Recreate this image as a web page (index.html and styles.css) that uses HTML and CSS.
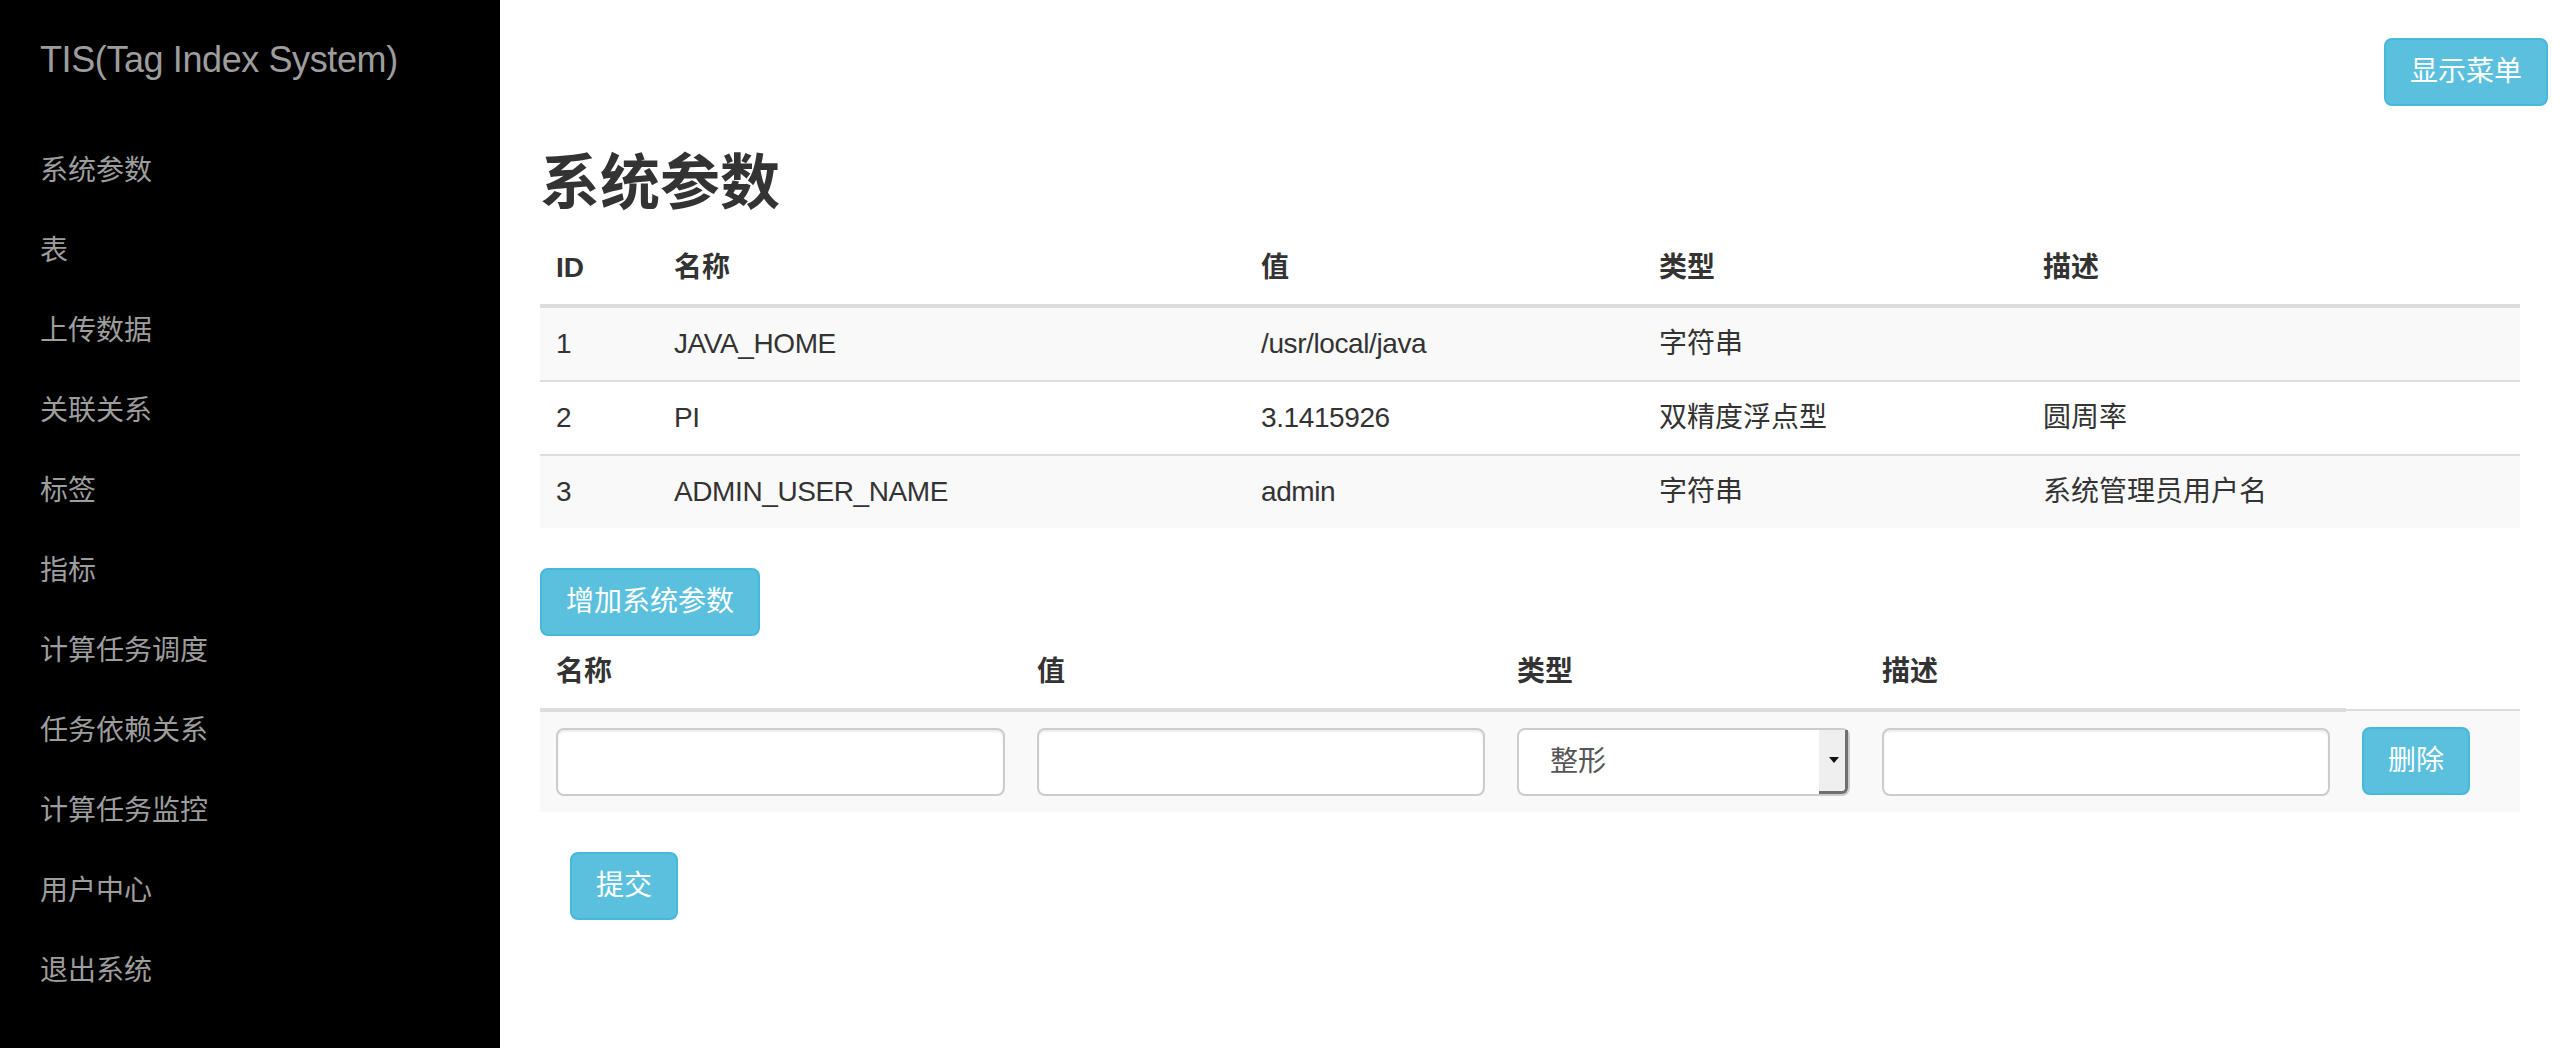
FILE: index.html
```html
<!DOCTYPE html>
<html lang="zh-CN">
<head>
<meta charset="utf-8">
<title>TIS(Tag Index System)</title>
<link rel="stylesheet" href="styles.css">
</head>
<body>
<aside class="sidebar">
  <div class="brand">TIS(Tag Index System)</div>
  <ul class="nav">
    <li><a href="#">系统参数</a></li>
    <li><a href="#">表</a></li>
    <li><a href="#">上传数据</a></li>
    <li><a href="#">关联关系</a></li>
    <li><a href="#">标签</a></li>
    <li><a href="#">指标</a></li>
    <li><a href="#">计算任务调度</a></li>
    <li><a href="#">任务依赖关系</a></li>
    <li><a href="#">计算任务监控</a></li>
    <li><a href="#">用户中心</a></li>
    <li><a href="#">退出系统</a></li>
  </ul>
</aside>
<main class="main">
  <div class="topbar">
    <button class="btn btn-info" type="button">显示菜单</button>
  </div>
  <div class="content">
    <h2 class="page-title">系统参数</h2>
    <table class="table table-striped params">
      <colgroup>
        <col class="c-id"><col class="c-name"><col class="c-value"><col class="c-type"><col class="c-desc">
      </colgroup>
      <thead>
        <tr><th>ID</th><th>名称</th><th>值</th><th>类型</th><th>描述</th></tr>
      </thead>
      <tbody>
        <tr><td class="latin">1</td><td class="latin">JAVA_HOME</td><td class="latin">/usr/local/java</td><td>字符串</td><td></td></tr>
        <tr><td class="latin">2</td><td class="latin">PI</td><td class="latin">3.1415926</td><td>双精度浮点型</td><td>圆周率</td></tr>
        <tr><td class="latin">3</td><td class="latin">ADMIN_USER_NAME</td><td class="latin">admin</td><td>字符串</td><td>系统管理员用户名</td></tr>
      </tbody>
    </table>

    <button class="btn btn-info" type="button">增加系统参数</button>
    <table class="table table-striped newparams">
      <colgroup>
        <col class="n-name"><col class="n-value"><col class="n-type"><col class="n-desc"><col class="n-op">
      </colgroup>
      <thead>
        <tr><th>名称</th><th>值</th><th>类型</th><th>描述</th></tr>
      </thead>
      <tbody>
        <tr>
          <td><input class="form-control" type="text"></td>
          <td><input class="form-control" type="text"></td>
          <td>
            <div class="select-wrap">
              <select class="form-control form-select"><option>整形</option><option>字符串</option><option>双精度浮点型</option></select>
            </div>
          </td>
          <td><input class="form-control" type="text"></td>
          <td><button class="btn btn-info" type="button">删除</button></td>
        </tr>
      </tbody>
    </table>
    <div class="form-actions">
      <button class="btn btn-info" type="submit">提交</button>
    </div>
  </div>
</main>
</body>
</html>
```

FILE: styles.css
```css
html, body {
  margin: 0;
  padding: 0;
}

body {
  display: flex;
  min-height: 1048px;
  font-family: "Liberation Sans", "Noto Sans CJK SC", sans-serif;
  font-size: 28px;
  line-height: 40px;
  color: #333;
  background: #fff;
}

/* ---------- sidebar ---------- */
.sidebar {
  width: 500px;
  flex: 0 0 500px;
  background: #000;
  padding-top: 40px;
  box-sizing: border-box;
}

.brand {
  padding-left: 40px;
  font-size: 36px;
  line-height: 40px;
  letter-spacing: -0.4px;
  color: #9d9d9d;
}

.nav {
  list-style: none;
  margin: 51px 0 0;
  padding: 0;
}

.nav a {
  display: block;
  padding: 20px 40px;
  font-size: 28px;
  line-height: 40px;
  color: #9d9d9d;
  text-decoration: none;
}

/* ---------- main ---------- */
.main {
  flex: 1;
  padding: 38px 12px 0 40px;
  box-sizing: border-box;
}

.topbar {
  display: flex;
  justify-content: flex-end;
}

.content {
  margin-right: 28px;
}

.page-title {
  margin: 45px 0 15px;
  font-size: 60px;
  line-height: 66px;
  font-weight: 700;
  color: #333;
}

/* ---------- buttons ---------- */
.btn {
  display: inline-block;
  margin: 0;
  padding: 12px 24px;
  font-family: inherit;
  font-size: 28px;
  line-height: 40px;
  font-weight: 400;
  color: #fff;
  background: #5bc0de;
  border: 2px solid #46b8da;
  border-radius: 8px;
  cursor: pointer;
  vertical-align: middle;
}

/* ---------- tables ---------- */
.table {
  width: 100%;
  table-layout: fixed;
  border-collapse: collapse;
  border-spacing: 0;
  margin-bottom: 40px;
}

.table th {
  padding: 16px;
  text-align: left;
  font-weight: 700;
  line-height: 40px;
  vertical-align: bottom;
  border-bottom: 4px solid #ddd;
}

.table td {
  padding: 16px;
  line-height: 40px;
  vertical-align: top;
  border-top: 2px solid #ddd;
}

.table td.latin {
  letter-spacing: -0.4px;
}

.table-striped tbody tr:nth-child(odd) td {
  background: #f9f9f9;
}

.c-id { width: 118px; }
.c-name { width: 587px; }
.c-value { width: 398px; }
.c-type { width: 384px; }
.c-desc { width: 493px; }

.n-name { width: 481px; }
.n-value { width: 480px; }
.n-type { width: 365px; }
.n-desc { width: 480px; }
.n-op { width: 174px; }

/* ---------- form controls ---------- */
.form-control {
  display: block;
  width: 100%;
  height: 68px;
  margin: 0;
  padding: 12px 24px;
  box-sizing: border-box;
  font-family: inherit;
  font-size: 28px;
  line-height: 40px;
  color: #555;
  background: #fff;
  border: 2px solid #ccc;
  border-radius: 8px;
  box-shadow: inset 0 2px 2px rgba(0, 0, 0, 0.075);
}

.select-wrap {
  position: relative;
}

.form-select {
  appearance: none;
  -webkit-appearance: none;
  padding-left: 31px;
  box-shadow: none;
}

.select-wrap::after {
  content: "";
  position: absolute;
  top: 2px;
  right: 2px;
  bottom: 2px;
  width: 26px;
  background: #efefef;
  border-right: 3px solid #707070;
  border-bottom: 3px solid #707070;
  border-bottom-right-radius: 6px;
  pointer-events: none;
}

.select-wrap::before {
  content: "";
  position: absolute;
  z-index: 1;
  top: 29px;
  right: 11px;
  border-left: 5px solid transparent;
  border-right: 5px solid transparent;
  border-top: 6px solid #111;
  pointer-events: none;
}

.form-actions {
  padding-left: 30px;
}
```
